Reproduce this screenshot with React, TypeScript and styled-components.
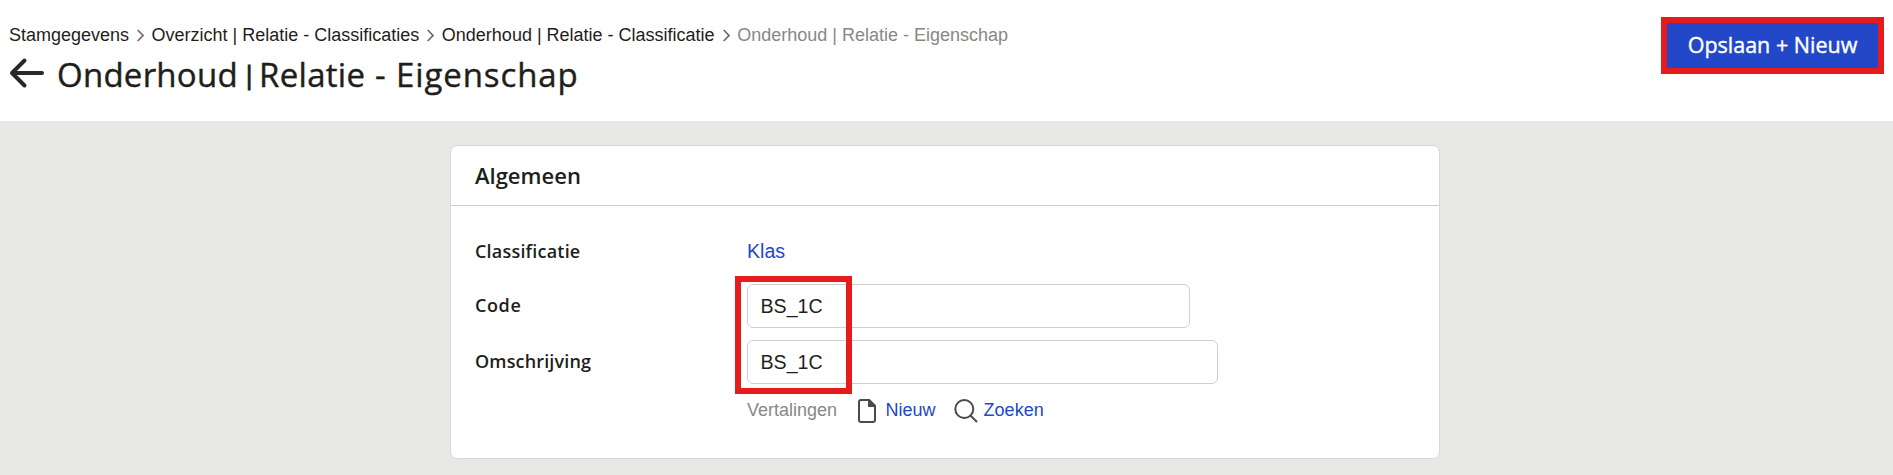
import React from "react";
import styled, { createGlobalStyle } from "styled-components";

const GlobalStyle = createGlobalStyle`
  * { box-sizing: border-box; }
  body { margin: 0; background: #e8e8e6; color: #1f1e1b; font-family: "Liberation Sans", Arial, sans-serif; }
  h1, h2 { margin: 0; }
`;
const Page = styled.div`
  height: 475px;
  overflow: hidden;
`;
const Header = styled.header`
  display: flex;
  justify-content: space-between;
  align-items: flex-start;
  height: 121px;
  padding: 17px 9px 0;
  background: #fff;
`;
const Breadcrumbs = styled.nav`
  display: flex;
  align-items: center;
  height: 21px;
  margin-top: 8px;
  font-size: 18px;
  line-height: 21px;
  white-space: nowrap;
`;
const Crumb = styled.span<{ $current?: boolean }>`
  color: ${(p) => (p.$current ? "#888885" : "#1f1e1b")};
`;
const Chevron = styled.svg`
  width: 7px;
  height: 13px;
  margin: 0 7.5px 0 8px;
  overflow: visible;
`;
const TitleRow = styled.div`
  display: flex;
  align-items: center;
  height: 44px;
  margin-top: 5px;
`;
const Title = styled.h1`
  display: flex;
  margin: 4px 0 0 12px;
  font: 400 33px/44px "Open Sans", sans-serif;
`;
const TitleWord = styled.span<{ $width: number; $spacing: number }>`
  width: ${(p) => p.$width}px;
  letter-spacing: ${(p) => p.$spacing}px;
  white-space: nowrap;
  -webkit-text-stroke: 0.4px currentColor;
`;
const TitleBar = styled.span`
  width: 17px;
  font-size: 26px;
  line-height: 42px;
  -webkit-text-stroke: 1px currentColor;
`;
const SaveButton = styled.button`
  width: 223px;
  height: 57px;
  padding: 0 0 2px;
  border: 6px solid #e61c1c;
  background: #2347c9;
  color: #fff;
  font: 500 21.5px/42px "Open Sans", sans-serif;
  -webkit-text-stroke: 0.4px currentColor;
`;
const Card = styled.main`
  width: 990px;
  height: 314px;
  margin: 24px 0 0 450px;
  border: 1px solid #d5d9d8;
  border-radius: 7px;
  background: #fff;
`;
const CardTitle = styled.h2`
  height: 60px;
  padding-left: 24px;
  border-bottom: 1px solid #cbcbcb;
  font: 600 22px/58px "Open Sans", sans-serif;
`;
const Row = styled.div<{ $height: number }>`
  display: flex;
  align-items: center;
  height: ${(p) => p.$height}px;
  padding-left: 24px;
`;
const Form = styled.div`
  padding-top: 17px;
`;
const Label = styled.label<{ $spacing: number; $lift?: number }>`
  width: 272px;
  padding-bottom: ${(p) => p.$lift ?? 0}px;
  font: 600 18px/24px "Open Sans", sans-serif;
  letter-spacing: ${(p) => p.$spacing}px;
`;
const Link = styled.a<{ $size: number }>`
  color: #2347c9;
  font-size: ${(p) => p.$size}px;
`;
const LinkCell = styled.div`
  padding-top: 1px;
`;
const FieldWrap = styled.div`
  position: relative;
`;
const Field = styled.input<{ $width: number }>`
  display: block;
  width: ${(p) => p.$width}px;
  height: 44px;
  padding: 0 12.5px;
  border: 1px solid #cfcfcf;
  border-radius: 6px;
  outline: none;
  color: #1f1e1b;
  background: #fff;
  font: 19.6px "Liberation Sans", Arial, sans-serif;
`;
const Highlight = styled.div`
  position: absolute;
  top: -8.5px;
  left: -12.5px;
  width: 117.4px;
  height: 118px;
  border: 6px solid #e61c1c;
  pointer-events: none;
  z-index: 1;
`;
const Translations = styled.div`
  display: flex;
  align-items: center;
  height: 24px;
  margin: 8px 0 0 296px;
  font-size: 18px;
`;
const Muted = styled.span`
  color: #888885;
`;
const Icon = styled.svg<{ $left: number; $right: number }>`
  margin-top: 1px;
  margin-left: ${(p) => p.$left}px;
  margin-right: ${(p) => p.$right}px;
  fill: none;
  stroke: #4b4b4a;
  stroke-width: 2;
`;

const Separator = () => (
  <Chevron viewBox="0 0 7 13">
    <path d="M.7 1 6 6.5.7 12" fill="none" stroke="#706f6d" strokeWidth="1.8" />
  </Chevron>
);

export default function App() {
  return (
    <Page>
      <GlobalStyle />
      <Header>
        <div>
          <Breadcrumbs>
            <Crumb>Stamgegevens</Crumb>
            <Separator />
            <Crumb>Overzicht | Relatie - Classificaties</Crumb>
            <Separator />
            <Crumb>Onderhoud | Relatie - Classificatie</Crumb>
            <Separator />
            <Crumb $current>Onderhoud | Relatie - Eigenschap</Crumb>
          </Breadcrumbs>
          <TitleRow>
            <svg width="36" height="32" viewBox="0 0 36 32" fill="none" stroke="#292927" strokeWidth="4" strokeLinecap="round" strokeLinejoin="round">
              <path d="M15.5 3.5 3 16l12.5 12.5M3 16h30" />
            </svg>
            <Title>
              <TitleWord $width={185} $spacing={0.25}>Onderhoud</TitleWord>
              <TitleBar>|</TitleBar>
              <TitleWord $width={116} $spacing={0.3}>Relatie</TitleWord>
              <TitleWord $width={21} $spacing={0}>-</TitleWord>
              <TitleWord $width={190} $spacing={0.9}>Eigenschap</TitleWord>
            </Title>
          </TitleRow>
        </div>
        <SaveButton>Opslaan + Nieuw</SaveButton>
      </Header>
      <Card>
        <CardTitle>Algemeen</CardTitle>
        <Form>
          <Row $height={55}>
            <Label $spacing={0.2}>Classificatie</Label>
            <LinkCell><Link $size={19.6}>Klas</Link></LinkCell>
          </Row>
          <Row $height={56}>
            <Label $spacing={0.6} $lift={2}>Code</Label>
            <FieldWrap>
              <Field $width={443} defaultValue="BS_1C" />
              <Highlight />
            </FieldWrap>
          </Row>
          <Row $height={56}>
            <Label $spacing={0.15} $lift={2}>Omschrijving</Label>
            <Field $width={471} defaultValue="BS_1C" />
          </Row>
          <Translations>
            <Muted>Vertalingen</Muted>
            <Icon $left={21} $right={9.5} width="18" height="24" viewBox="0 0 18 24">
              <path d="M3 1h8l6 6v14a2 2 0 0 1-2 2H3a2 2 0 0 1-2-2V3a2 2 0 0 1 2-2Z" />
              <path d="M11 1v6h6Z" fill="#4b4b4a" />
            </Icon>
            <Link $size={18}>Nieuw</Link>
            <Icon $left={18} $right={6} width="24" height="24" viewBox="0 0 24 24">
              <circle cx="10.3" cy="10" r="9" />
              <path d="m16.5 16.5 6.5 6.5" />
            </Icon>
            <Link $size={18}>Zoeken</Link>
          </Translations>
        </Form>
      </Card>
    </Page>
  );
}
